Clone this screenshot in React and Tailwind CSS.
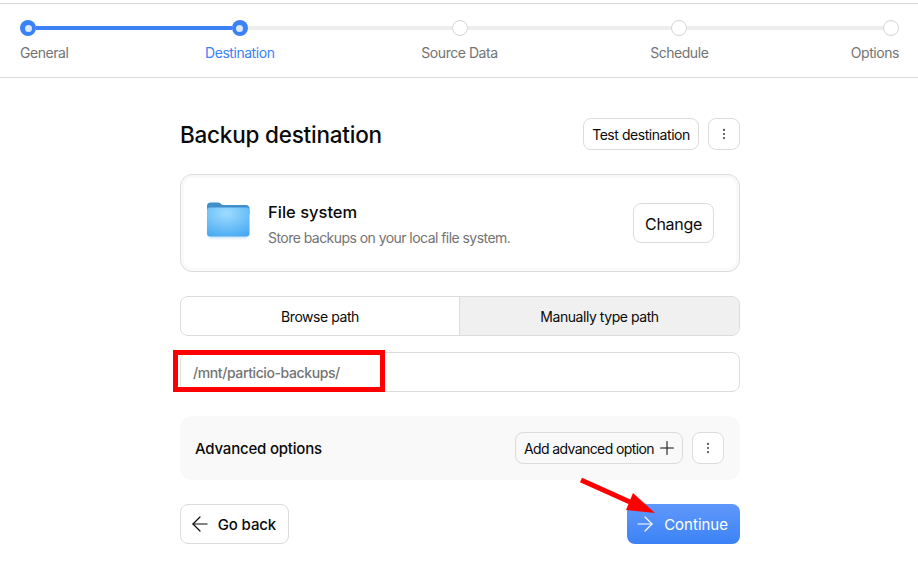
import { ArrowLeft, ArrowRight, EllipsisVertical, Plus } from 'lucide-react';

function StepDot({ active }) {
    if (active) {
        return (
            <span className="w-4 h-4 shrink-0 rounded-full bg-[#3b82f6] flex items-center justify-center">
                <span className="w-[7px] h-[7px] rounded-full bg-[#dbe7fe]"></span>
            </span>
        );
    }
    return <span className="w-4 h-4 shrink-0 rounded-full bg-white border border-[#d4d4d4]"></span>;
}

function Bar({ on }) {
    return <span className={on ? 'flex-1 h-1 bg-[#3b82f6]' : 'flex-1 h-1 bg-[#eeeeee]'}></span>;
}

function Stepper() {
    return (
        <div className="mt-[3px] h-[75px] border-y border-[#d9d9d9] pl-5 pr-[19px] pt-4 grid grid-cols-[1fr_2fr_2fr_2fr_1fr] text-sm tracking-[-0.45px] text-[#737373]">
            <div className="flex flex-col gap-[7px]">
                <div className="flex items-center"><StepDot active /><Bar on /></div>
                <span>General</span>
            </div>
            <div className="flex flex-col gap-[7px] items-center">
                <div className="flex items-center w-full"><Bar on /><StepDot active /><Bar /></div>
                <span className="text-[#3b82f6]">Destination</span>
            </div>
            <div className="flex flex-col gap-[7px] items-center">
                <div className="flex items-center w-full"><Bar /><StepDot /><Bar /></div>
                <span>Source Data</span>
            </div>
            <div className="flex flex-col gap-[7px] items-center">
                <div className="flex items-center w-full"><Bar /><StepDot /><Bar /></div>
                <span>Schedule</span>
            </div>
            <div className="flex flex-col gap-[7px] items-end">
                <div className="flex items-center w-full"><Bar /><StepDot /></div>
                <span>Options</span>
            </div>
        </div>
    );
}

function FolderIcon() {
    return (
        <svg className="mb-[7px] shrink-0" width="44" height="40" viewBox="0 0 44 40" fill="none">
            <defs>
                <radialGradient id="folderFront" cx="0.45" cy="0.2" r="0.9">
                    <stop offset="0" stopColor="#9fdcff" />
                    <stop offset="1" stopColor="#45a8f2" />
                </radialGradient>
                <filter id="folderShadow" x="-20%" y="-20%" width="140%" height="150%">
                    <feGaussianBlur stdDeviation="1.6" />
                </filter>
            </defs>
            <rect x="2" y="10" width="40" height="28" rx="3" fill="#90c8f2" opacity="0.55" filter="url(#folderShadow)" />
            <path d="M1 6C1 3.8 2.5 2.5 4.5 2.5H12C14 2.5 15 4.6 17 5H40C42 5 43.5 6.4 43.5 8.5V14H1V6Z" fill="#3f8fcb" />
            <rect x="1" y="7.5" width="42.5" height="29" rx="3" fill="url(#folderFront)" />
        </svg>
    );
}

function KebabButton() {
    return (
        <button className="w-8 h-8 shrink-0 rounded-lg border border-[#dcdcdc] bg-white flex items-center justify-center text-[#525252]">
            <EllipsisVertical size={14} strokeWidth={1.75} />
        </button>
    );
}

export default function App() {
    return (
        <div className="w-[918px] h-[573px] overflow-hidden bg-white font-['Inter',sans-serif] text-[#0a0a0a]">
            <Stepper />

            <main className="relative w-[560px] ml-[180px] pt-10 flex flex-col">
                <div className="flex items-center justify-between h-8">
                    <h1 className="pt-0.5 text-[22.5px] font-medium tracking-[-0.225px]">Backup destination</h1>
                    <div className="flex items-center gap-[9px]">
                        <button className="h-8 w-[116px] pt-0.5 rounded-lg border border-[#dcdcdc] bg-white text-sm tracking-[-0.45px]">Test destination</button>
                        <KebabButton />
                    </div>
                </div>

                <div className="mt-[24px] h-[98px] rounded-xl border border-[#dcdcdc] shadow-[inset_0_0_0_3px_#f9f9f9] pl-[25px] pr-[25px] flex items-center">
                    <FolderIcon />
                    <div className="ml-[18px] pt-0.5 flex-1">
                        <div className="text-[16.5px] font-medium leading-6">File system</div>
                        <div className="mt-1 text-sm leading-5 tracking-[-0.55px] text-[#737373]">Store backups on your local file system.</div>
                    </div>
                    <button className="w-[81px] h-10 pt-0.5 rounded-lg border border-[#dcdcdc] bg-white text-base tracking-[-0.3px]">Change</button>
                </div>

                <div className="mt-6 h-10 rounded-lg border border-[#dcdcdc] grid grid-cols-2 text-sm tracking-[-0.45px] overflow-hidden">
                    <div className="pt-0.5 flex items-center justify-center bg-white border-r border-[#dcdcdc]">Browse path</div>
                    <div className="pt-0.5 flex items-center justify-center bg-[#f0f0f0]">Manually type path</div>
                </div>

                <div className="mt-4 h-10 pt-0.5 rounded-lg border border-[#dcdcdc] flex items-center pl-3 text-sm font-medium tracking-[-0.4px] text-[#737373]">/mnt/particio-backups/</div>

                <div className="mt-6 h-16 rounded-xl bg-[#f9f9f9] pl-[15px] pr-4 flex items-center justify-between">
                    <span className="pt-0.5 text-[15px] font-medium tracking-[-0.2px]">Advanced options</span>
                    <div className="flex items-center gap-[9px]">
                        <button className="h-8 w-[168px] pr-1 rounded-lg border border-[#dcdcdc] bg-[#f9f9f9] text-sm tracking-[-0.6px] flex items-center justify-end gap-0.5">
                            <span className="pt-0.5">Add advanced option</span> <Plus size={22} strokeWidth={1.1} />
                        </button>
                        <KebabButton />
                    </div>
                </div>

                <div className="mt-6 flex items-center justify-between">
                    <button className="h-10 w-[109px] pr-3 rounded-lg border border-[#dcdcdc] bg-white text-[15px] flex items-center justify-end gap-1.5 font-medium tracking-[-0.15px]">
                        <ArrowLeft size={24} strokeWidth={1.2} /> <span className="pt-0.5">Go back</span>
                    </button>
                    <button className="h-10 w-[113px] pr-3 rounded-lg bg-gradient-to-b from-[#6098fa] to-[#3b82f6] text-white text-[15px] flex items-center justify-end gap-[7px]">
                        <ArrowRight size={24} strokeWidth={1.2} /> <span className="pt-0.5">Continue</span>
                    </button>
                </div>

                {/* red annotations from the original screenshot */}
                <div className="absolute left-[-7px] top-[272px] w-[212px] h-[42px] border-[5px] border-[#ff0000]"></div>
                <svg className="absolute left-[395px] top-[395px]" width="90" height="50" viewBox="0 0 90 50">
                    <path d="M6 7L55 29" stroke="#ff0000" strokeWidth="5" />
                    <path d="M80 40L58 20L51 37Z" fill="#ff0000" />
                </svg>
            </main>
        </div>
    );
}
